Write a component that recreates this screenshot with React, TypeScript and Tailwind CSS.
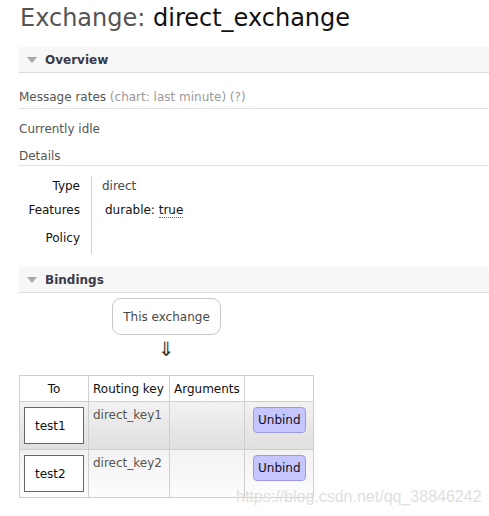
import React from 'react'

function SectionHeader({ title }: { title: string }) {
  return (
    <div className="flex items-center h-[26px] bg-[#f7f7f7] border-b border-[#dcdcdc] pl-[8px]">
      <span className="inline-block w-0 h-0 border-l-[5px] border-r-[5px] border-t-[6px] border-l-transparent border-r-transparent border-t-[#a8a8a8] mr-[8px]" />
      <span className="font-bold text-[#3a3a4a] text-[12px]">{title}</span>
    </div>
  )
}

function QueueBox({ name }: { name: string }) {
  return (
    <div className="w-[60px] h-[37px] bg-white border border-[#666] flex items-center pl-[10px] text-[#111]">
      {name}
    </div>
  )
}

function UnbindButton() {
  return (
    <button className="h-[26px] px-[4px] bg-[#c6c6ff] border border-[#9a9ae8] rounded-[4px] text-[#111] text-[12px] leading-none">
      Unbind
    </button>
  )
}

export default function App() {
  const bindings = [
    { to: 'test1', key: 'direct_key1', bg: 'bg-gradient-to-b from-[#f2f2f2] to-[#dfdfdf]' },
    { to: 'test2', key: 'direct_key2', bg: 'bg-gradient-to-b from-[#f2f2f2] to-[#fdfdfd]' },
  ]

  return (
    <div
      className="relative w-[489px] h-[516px] bg-white overflow-hidden text-[12px] text-[#484848]"
      style={{ fontFamily: '"DejaVu Sans", Verdana, sans-serif' }}
    >
      <div className="pl-[19px]">
        {/* Titulo */}
        <h1 className="pt-[3px] pl-[1px] text-[24px] leading-[30px] font-normal">
          <span className="text-[#555]">Exchange: </span>
          <span className="text-[#111]">direct_exchange</span>
        </h1>

        <div className="mt-[14px]">
          <SectionHeader title="Overview" />
        </div>

        <div className="mt-[17px] pb-[3px] border-b border-[#e2e2e2] leading-[15px]">
          <span className="text-[#555]">Message rates </span>
          <span className="text-[#999]">(chart: last minute) (?)</span>
        </div>

        <div className="mt-[13px] leading-[15px] text-[#555]">Currently idle</div>

        <div className="mt-[12px] pb-[1px] border-b border-[#e2e2e2] leading-[15px] text-[#555]">Details</div>

        {/* Tabla de detalles */}
        <div className="flex mt-[10px]">
          <div className="w-[72px] pr-[11px] flex flex-col items-end text-[#111]">
            <div className="h-[25px] pt-[1px]">Type</div>
            <div className="h-[27px]">Features</div>
            <div className="h-[26px] pt-[1px]">Policy</div>
          </div>
          <div className="border-l border-[#d0d0d0] pl-[10px] flex flex-col">
            <div className="h-[25px] pt-[1px]">direct</div>
            <div className="h-[27px] pl-[3px] text-[#111]">
              durable:{' '}
              <span className="border-b border-dotted border-[#666]">true</span>
            </div>
            <div className="h-[26px]" />
          </div>
        </div>

        <div className="mt-[13px]">
          <SectionHeader title="Bindings" />
        </div>

        {/* Diagrama */}
        <div className="pl-[93px] mt-[5px]">
          <div className="w-[109px] h-[37px] border border-[#c8c8c8] rounded-[9px] flex items-center justify-center text-[#484848]">
            This exchange
          </div>
          <div className="w-[109px] text-center text-[20px] leading-[24px] text-[#333] mt-[2px]">⇓</div>
        </div>

        {/* Tabla de bindings */}
        <table className="mt-[14px] border-collapse border border-[#cfcfcf] text-[12px]">
          <thead>
            <tr className="h-[26px] bg-white text-[#111]">
              <th className="w-[69px] border border-[#cfcfcf] font-normal text-center">To</th>
              <th className="w-[81px] border border-[#cfcfcf] font-normal text-left pl-[4px]">Routing key</th>
              <th className="w-[75px] border border-[#cfcfcf] font-normal text-left pl-[4px]">Arguments</th>
              <th className="w-[69px] border border-[#cfcfcf]" />
            </tr>
          </thead>
          <tbody>
            {bindings.map((b) => (
              <tr key={b.to} className={`h-[48px] ${b.bg}`}>
                <td className="border border-[#cfcfcf] align-top pt-[5px] pl-[4px]">
                  <QueueBox name={b.to} />
                </td>
                <td className="border border-[#cfcfcf] align-top pt-[4px] pl-[4px] text-[#555]">{b.key}</td>
                <td className="border border-[#cfcfcf]" />
                <td className="border border-[#cfcfcf] align-top pt-[5px] pl-[8px]">
                  <UnbindButton />
                </td>
              </tr>
            ))}
          </tbody>
        </table>
      </div>

      {/* Marca de agua */}
      <div
        className="absolute left-[236px] top-[487px] text-[16px] text-[#e0e0e0] leading-[20px]"
        style={{ fontFamily: '"Liberation Sans", Arial, sans-serif' }}
      >
        https://blog.csdn.net/qq_38846242
      </div>
    </div>
  )
}
